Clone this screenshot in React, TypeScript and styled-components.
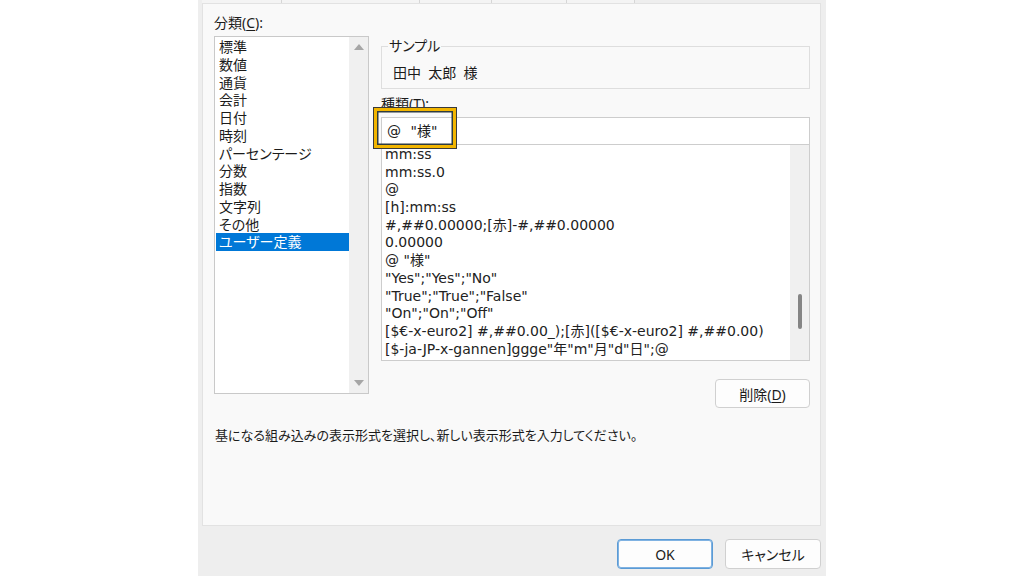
import React from "react";
import styled, { createGlobalStyle } from "styled-components";

const GlobalStyle = createGlobalStyle`
  html, body { margin: 0; padding: 0; background: #ffffff; }
  body {
    font-family: "Noto Sans", "Noto Sans CJK JP", sans-serif;
    font-size: 14px;
    color: #1b1b1b;
    font-feature-settings: "palt" 1;
  }
  * { box-sizing: border-box; }
`;

const Dialog = styled.div`
  width: 628px;
  height: 576px;
  margin: 0 auto;
  background: #eeeeee;
  display: flex;
  flex-direction: column;
  padding: 0 5px 7px 4px;
`;

const TabStrip = styled.div`
  height: 3px;
  display: flex;
`;

const Tab = styled.div<{ $w: number }>`
  width: ${(p) => p.$w}px;
  height: 3px;
  border-right: 1px solid #d6d6d6;
  background: #f4f4f4;
`;

const Panel = styled.div`
  flex: 1;
  background: #f9f9f9;
  border: 1px solid #e2e2e2;
  padding: 9px 10px 0 11px;
  display: flex;
  flex-direction: column;
`;

const Columns = styled.div`
  display: grid;
  grid-template-columns: 155px 429px;
  column-gap: 12px;
`;

const LeftCol = styled.div`
  display: flex;
  flex-direction: column;
`;

const RightCol = styled.div`
  display: flex;
  flex-direction: column;
`;

const Label = styled.div`
  height: 20px;
  line-height: 20px;
  white-space: nowrap;
`;

const Key = styled.span`
  text-decoration: underline;
  text-underline-offset: 2px;
`;

const CategoryBox = styled.div`
  margin-top: 3px;
  height: 358px;
  border: 1px solid #c9c9c9;
  background: #ffffff;
  display: flex;
`;

const CategoryItems = styled.div`
  flex: 1;
  padding: 1px 0 0 1px;
`;

const CategoryItem = styled.div<{ $sel?: boolean }>`
  height: 17.75px;
  line-height: 17.75px;
  padding-left: 3px;
  white-space: nowrap;
  background: ${(p) => (p.$sel ? "#0078d7" : "transparent")};
  color: ${(p) => (p.$sel ? "#ffffff" : "#1b1b1b")};
`;

const VScroll = styled.div`
  width: 19px;
  background: #f0f0f0;
  display: flex;
  flex-direction: column;
  justify-content: space-between;
  align-items: center;
  padding: 7px 0 7px;
`;

const Arrow = styled.div<{ $down?: boolean }>`
  width: 0;
  height: 0;
  border-left: 5px solid transparent;
  border-right: 5px solid transparent;
  ${(p) =>
    p.$down
      ? "border-top: 6px solid #a6a6a6;"
      : "border-bottom: 6px solid #a6a6a6;"}
`;

const Fieldset = styled.fieldset`
  margin: 24px 0 0 0;
  border: 1px solid #dedede;
  padding: 9px 12px 6px 11px;
  min-width: 0;
`;

const Legend = styled.legend`
  padding: 0 1px;
  margin-left: -5px;
  line-height: 18px;
  height: 18px;
`;

const SampleText = styled.div`
  line-height: 18px;
  height: 18px;
  white-space: pre;
`;

const TypeLabel = styled(Label)`
  margin-top: 6px;
  height: 18px;
  line-height: 18px;
`;

const InputWrap = styled.div`
  position: relative;
  margin-top: 4px;
`;

const TypeInput = styled.div`
  height: 28px;
  border: 1px solid #cdcdcd;
  background: #ffffff;
  padding-left: 5px;
  line-height: 26px;
  white-space: pre;
  word-spacing: 5px;
  font-family: "DejaVu Sans", "Noto Sans CJK JP", sans-serif;
`;

const Highlight = styled.div`
  position: absolute;
  left: -7px;
  top: -9px;
  width: 82px;
  height: 40px;
  border: 3px solid #f2b500;
  box-shadow: 0 0 0 1px #3a3a3a, inset 0 0 0 1.5px #2e3b40;
  pointer-events: none;
`;

const FormatBox = styled.div`
  margin-top: -1px;
  height: 217px;
  border: 1px solid #cdcdcd;
  background: #ffffff;
  display: flex;
`;

const FormatItems = styled.div`
  flex: 1;
  padding: 1px 0 0 3px;
  overflow: hidden;
  font-family: "DejaVu Sans", "Noto Sans CJK JP", sans-serif;
  color: #222222;
`;

const FormatItem = styled.div`
  height: 17.7px;
  line-height: 17.7px;
  white-space: pre;
`;

const ThinScroll = styled.div`
  width: 19px;
  background: #f0f0f0;
  display: flex;
  justify-content: center;
  padding-top: 149px;
`;

const Thumb = styled.div`
  width: 4px;
  height: 35px;
  border-radius: 2px;
  background: #858585;
  margin-left: 1px;
`;

const DeleteRow = styled.div`
  display: flex;
  justify-content: flex-end;
  margin-top: 18px;
`;

const Button = styled.button<{ $primary?: boolean }>`
  width: 96px;
  height: 30px;
  font-family: "Noto Sans", "Noto Sans CJK JP", sans-serif;
  font-size: 14px;
  color: #1b1b1b;
  background: #fdfdfd;
  border: 1px solid ${(p) => (p.$primary ? "#5b9bd5" : "#d0d0d0")};
  box-shadow: ${(p) => (p.$primary ? "inset 0 0 0 1px #7fb2e2" : "none")};
  border-radius: 4px;
  padding: 0;
  font-feature-settings: "palt" 1;
`;

const DeleteButton = styled(Button)`
  width: 95px;
  height: 29px;
`;

const Description = styled.div`
  margin-top: 18px;
  line-height: 18px;
  font-size: 13px;
  padding-left: 1px;
  white-space: nowrap;
`;

const Footer = styled.div`
  margin-top: 13px;
  display: flex;
  justify-content: flex-end;
  gap: 12px;
`;

const categories = [
  "標準",
  "数値",
  "通貨",
  "会計",
  "日付",
  "時刻",
  "パーセンテージ",
  "分数",
  "指数",
  "文字列",
  "その他",
  "ユーザー定義",
];

const formats = [
  "mm:ss",
  "mm:ss.0",
  "@",
  "[h]:mm:ss",
  "#,##0.00000;[赤]-#,##0.00000",
  "0.00000",
  '@ "様"',
  '"Yes";"Yes";"No"',
  '"True";"True";"False"',
  '"On";"On";"Off"',
  "[$€-x-euro2] #,##0.00_);[赤]([$€-x-euro2] #,##0.00)",
  '[$-ja-JP-x-gannen]ggge"年"m"月"d"日";@',
];

export default function App() {
  return (
    <>
      <GlobalStyle />
      <Dialog>
        <TabStrip>
          <Tab $w={80} />
          <Tab $w={138} />
          <Tab $w={72} />
          <Tab $w={75} />
          <Tab $w={68} />
        </TabStrip>
        <Panel>
          <Columns>
            <LeftCol>
              <Label>
                分類(<Key>C</Key>):
              </Label>
              <CategoryBox>
                <CategoryItems>
                  {categories.map((c, i) => (
                    <CategoryItem key={c} $sel={i === categories.length - 1}>
                      {c}
                    </CategoryItem>
                  ))}
                </CategoryItems>
                <VScroll>
                  <Arrow />
                  <Arrow $down />
                </VScroll>
              </CategoryBox>
            </LeftCol>
            <RightCol>
              <Fieldset>
                <Legend>サンプル</Legend>
                <SampleText>{"田中  太郎  様"}</SampleText>
              </Fieldset>
              <TypeLabel>
                種類(<Key>T</Key>):
              </TypeLabel>
              <InputWrap>
                <TypeInput>{'@ "様"'}</TypeInput>
                <Highlight />
              </InputWrap>
              <FormatBox>
                <FormatItems>
                  {formats.map((f) => (
                    <FormatItem key={f}>{f}</FormatItem>
                  ))}
                </FormatItems>
                <ThinScroll>
                  <Thumb />
                </ThinScroll>
              </FormatBox>
              <DeleteRow>
                <DeleteButton>
                  削除(<Key>D</Key>)
                </DeleteButton>
              </DeleteRow>
            </RightCol>
          </Columns>
          <Description>
            基になる組み込みの表示形式を選択し、新しい表示形式を入力してください。
          </Description>
        </Panel>
        <Footer>
          <Button $primary>OK</Button>
          <Button>キャンセル</Button>
        </Footer>
      </Dialog>
    </>
  );
}
